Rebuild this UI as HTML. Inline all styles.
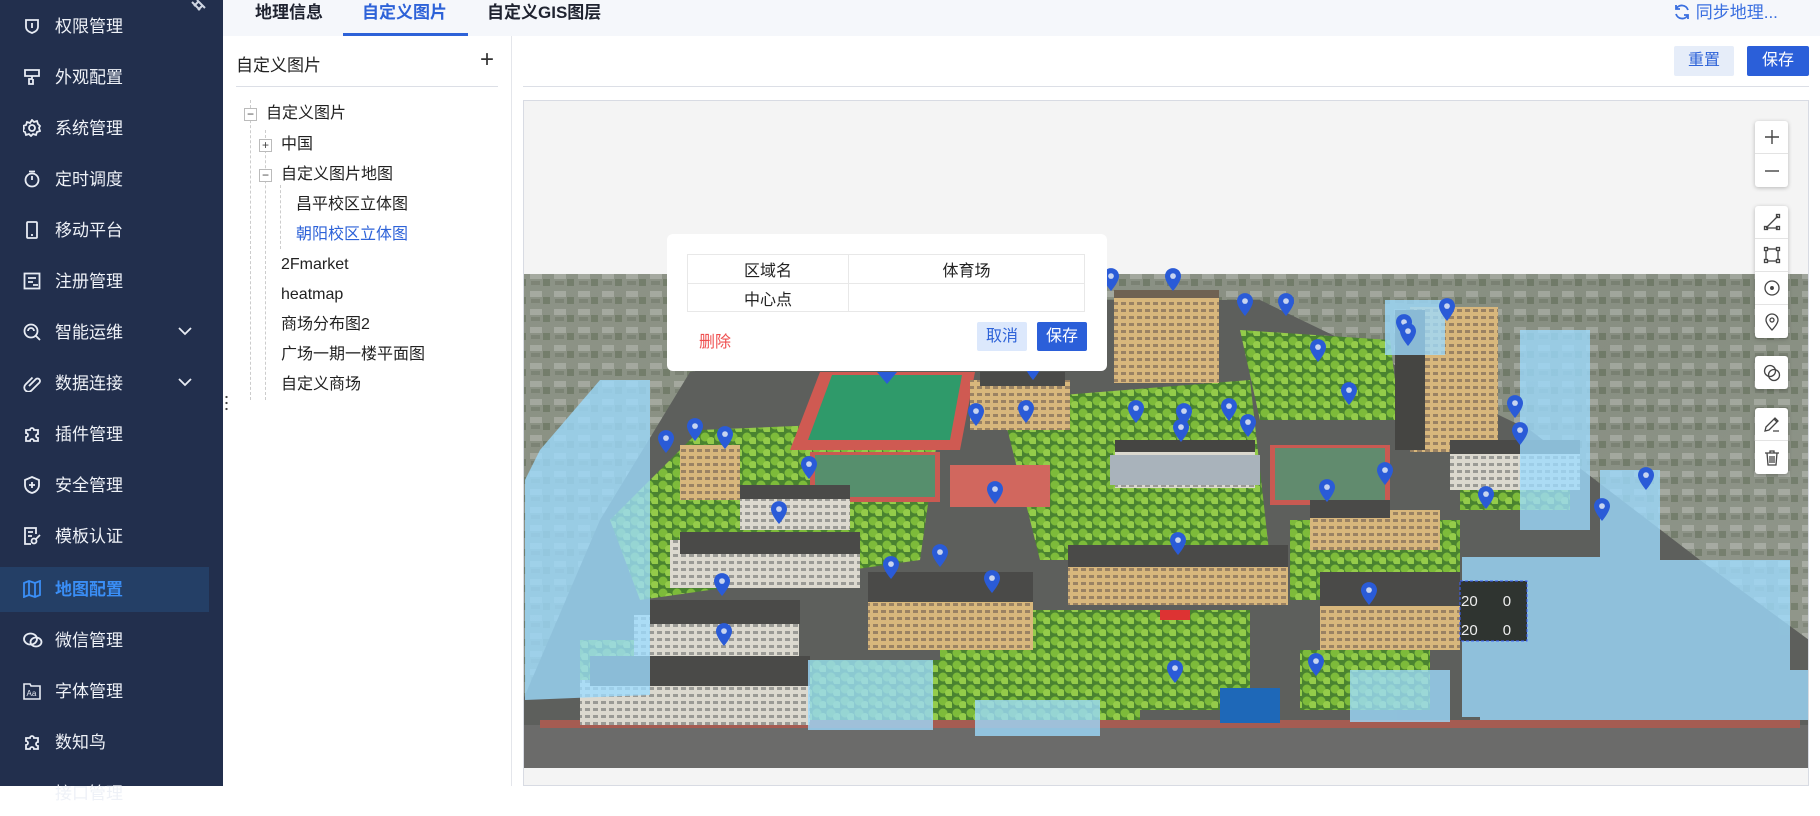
<!DOCTYPE html>
<html><head><meta charset="utf-8"><style>
*{margin:0;padding:0;box-sizing:border-box}
body{width:1820px;height:786px;overflow:hidden;background:#fff;font-family:"Liberation Sans","Noto Sans CJK SC",sans-serif;position:relative}
.abs{position:absolute}
#side{left:0;top:0;width:223px;height:786px;background:#222f4d}
.mi{position:absolute;left:0;width:209px;height:45px;color:#eef1f7;font-size:17px;line-height:45px}
.mi span{position:absolute;left:55px}
.mi svg{position:absolute;left:23px;top:13px}
.mi .ar{position:absolute;left:178px;top:16px}
.act{background:#243f66;color:#3a8ef6;font-weight:bold}
#tabs{left:223px;top:0;width:1597px;height:36px;background:#f5f7fb}
.tab{position:absolute;top:0;font-size:17px;font-weight:bold;line-height:22px;color:#1f2330}
.tree{font-size:16px;color:#222;position:absolute;line-height:20px}
.btn{position:absolute;font-size:16px;text-align:center;border-radius:2px}
.tb{position:absolute;left:1755px;width:33px;background:#fff;border-radius:3px;box-shadow:0 1px 4px rgba(0,0,0,.25)}
.tb div{height:33px;border-bottom:1px solid #e3e3e3;display:flex;align-items:center;justify-content:center}
.tb div:last-child{border-bottom:none}
</style></head><body>
<div id="side" class="abs">
 <svg class="abs" style="left:188px;top:0" width="22" height="16" viewBox="0 0 22 16"><path d="M4 2l8 8M9 0l8 8M6 6l5-5M10 10l5-5" stroke="#cfd6e3" stroke-width="2" fill="none"/></svg>
 <div class="mi" style="top:4px"><svg width="18" height="18" viewBox="0 0 18 18" fill="none" stroke="#e8ecf4" stroke-width="1.8"><path d="M3 3h12v7c0 3-3 5-6 6-3-1-6-3-6-6z"/><path d="M9 6v5"/></svg><span>权限管理</span></div>
 <div class="mi" style="top:55px"><svg width="18" height="18" viewBox="0 0 18 18" fill="none" stroke="#e8ecf4" stroke-width="1.8"><path d="M2 2h14v6H2zM9 8v3H6v5h4v-5"/></svg><span>外观配置</span></div>
 <div class="mi" style="top:106px"><svg width="18" height="18" viewBox="0 0 18 18" fill="none" stroke="#e8ecf4" stroke-width="1.8"><path d="M9 1l2 2 3-1 1 3 2 2-1 2 1 3-3 1-1 3-3-1-2 2-2-2-3 1-1-3-2-1 1-3-1-2 3-1 1-3 3 1z"/><circle cx="9" cy="9" r="3"/></svg><span>系统管理</span></div>
 <div class="mi" style="top:157px"><svg width="18" height="18" viewBox="0 0 18 18" fill="none" stroke="#e8ecf4" stroke-width="1.8"><circle cx="9" cy="10" r="6.5"/><path d="M6 1.5h6M9 6v4"/></svg><span>定时调度</span></div>
 <div class="mi" style="top:208px"><svg width="18" height="18" viewBox="0 0 18 18" fill="none" stroke="#e8ecf4" stroke-width="1.8"><rect x="4" y="1" width="10" height="16" rx="1"/><path d="M8 14h2"/></svg><span>移动平台</span></div>
 <div class="mi" style="top:259px"><svg width="18" height="18" viewBox="0 0 18 18" fill="none" stroke="#e8ecf4" stroke-width="1.8"><rect x="1.5" y="1.5" width="15" height="15"/><path d="M5 6h8M5 10h5M10 13h5"/></svg><span>注册管理</span></div>
 <div class="mi" style="top:310px"><svg width="18" height="18" viewBox="0 0 18 18" fill="none" stroke="#e8ecf4" stroke-width="1.8"><circle cx="8" cy="8" r="6.5"/><path d="M12 12l5 5M5 8a3 3 0 0 1 6 0"/></svg><span>智能运维</span><svg class="ar" width="14" height="10" viewBox="0 0 14 10"><path d="M1 2l6 6 6-6" stroke="#e8ecf4" stroke-width="1.8" fill="none"/></svg></div>
 <div class="mi" style="top:361px"><svg width="18" height="18" viewBox="0 0 18 18" fill="none" stroke="#e8ecf4" stroke-width="1.8"><path d="M6 12l7-7a2.5 2.5 0 0 1 3.5 3.5l-8 8a4 4 0 0 1-6-6l7-7"/></svg><span>数据连接</span><svg class="ar" width="14" height="10" viewBox="0 0 14 10"><path d="M1 2l6 6 6-6" stroke="#e8ecf4" stroke-width="1.8" fill="none"/></svg></div>
 <div class="mi" style="top:412px"><svg width="18" height="18" viewBox="0 0 18 18" fill="none" stroke="#e8ecf4" stroke-width="1.8"><path d="M3 5h4a2 2 0 1 1 4 0h4v4a2 2 0 1 0 0 4v3h-4a2 2 0 1 0-4 0H3v-4a2 2 0 1 0 0-4z"/></svg><span>插件管理</span></div>
 <div class="mi" style="top:463px"><svg width="18" height="18" viewBox="0 0 18 18" fill="none" stroke="#e8ecf4" stroke-width="1.8"><path d="M9 1l7 3v5c0 4-3 7-7 8-4-1-7-4-7-8V4z"/><path d="M6 9h6M9 6v6"/></svg><span>安全管理</span></div>
 <div class="mi" style="top:514px"><svg width="18" height="18" viewBox="0 0 18 18" fill="none" stroke="#e8ecf4" stroke-width="1.8"><path d="M13 7V1H2v16h6M5 5h5M5 9h4"/><circle cx="11" cy="14" r="2.5"/><path d="M13 12l4-4"/></svg><span>模板认证</span></div>
 <div class="mi act" style="top:567px"><svg width="18" height="18" viewBox="0 0 18 18" fill="none" stroke="#3a8ef6" stroke-width="1.8"><path d="M1 3l5-2 6 2 5-2v14l-5 2-6-2-5 2zM6 1v14M12 3v14"/></svg><span>地图配置</span></div>
 <div class="mi" style="top:618px"><svg width="20" height="18" viewBox="0 0 20 18" fill="none" stroke="#e8ecf4" stroke-width="1.8"><ellipse cx="7.5" cy="8" rx="6.5" ry="5.5"/><ellipse cx="13" cy="11" rx="5.5" ry="4.5"/></svg><span>微信管理</span></div>
 <div class="mi" style="top:669px"><svg width="18" height="18" viewBox="0 0 18 18" fill="none" stroke="#e8ecf4" stroke-width="1.6"><path d="M1 2h6l1 2h9v13H1z"/><text x="3.5" y="14" font-size="8" fill="#e8ecf4" stroke="none" font-family="Liberation Sans">Aa</text></svg><span>字体管理</span></div>
 <div class="mi" style="top:720px"><svg width="18" height="18" viewBox="0 0 18 18" fill="none" stroke="#e8ecf4" stroke-width="1.8"><path d="M3 5h4a2 2 0 1 1 4 0h4v4a2 2 0 1 0 0 4v3h-4a2 2 0 1 0-4 0H3v-4a2 2 0 1 0 0-4z"/></svg><span>数知鸟</span></div>
 <div class="mi" style="top:771px"><span>接口管理</span></div>
</div>
<div class="abs" style="left:223px;top:36px;width:1597px;height:750px;background:#fff"></div>
<div id="tabs" class="abs">
 <div class="tab" style="left:32px;top:2px">地理信息</div>
 <div class="tab" style="left:139px;top:2px;color:#2d62d8">自定义图片</div>
 <div class="abs" style="left:120px;top:33px;width:125px;height:3px;background:#2d62d8"></div>
 <div class="tab" style="left:264px;top:2px">自定义GIS图层</div>
 <div class="abs" style="left:1450px;top:2px;font-size:17px;color:#3a6fe0;line-height:22px"><svg width="18" height="18" viewBox="0 0 18 18" style="vertical-align:-3px" fill="none" stroke="#3a6fe0" stroke-width="1.8"><path d="M15 7A6.5 6.5 0 0 0 3 6M3 2v4h4M3 11a6.5 6.5 0 0 0 12 1M15 16v-4h-4"/></svg> 同步地理...</div>
</div>
<div class="abs" style="left:511px;top:36px;width:1px;height:750px;background:#e4e6eb"></div>
<div class="abs" style="left:225px;top:394px;width:3px;height:18px;background:radial-gradient(circle,#444 1px,transparent 1.3px) 0 0/3px 6px"></div>
<div class="abs" style="left:236px;top:51px;font-size:17px;color:#222">自定义图片</div>
<div class="abs" style="left:480px;top:46px;font-size:24px;color:#333;font-weight:300">+</div>
<div class="abs" style="left:236px;top:86px;width:262px;height:1px;background:#dcdfe6"></div>
<div class="abs" style="left:250px;top:100px;height:300px;border-left:1px dashed #ccc"></div>
<div class="abs" style="left:265px;top:130px;height:270px;border-left:1px dashed #ccc"></div>
<div class="abs" style="left:280px;top:185px;height:64px;border-left:1px dashed #ccc"></div>
<div class="abs" style="left:244px;top:108px;width:13px;height:13px;border:1px solid #bbb;background:#fff;font-size:12px;line-height:10px;text-align:center;color:#444">−</div>
<div class="abs" style="left:259px;top:139px;width:13px;height:13px;border:1px solid #bbb;background:#fff;font-size:12px;line-height:10px;text-align:center;color:#444">+</div>
<div class="abs" style="left:259px;top:169px;width:13px;height:13px;border:1px solid #bbb;background:#fff;font-size:12px;line-height:10px;text-align:center;color:#444">−</div>
<div class="tree" style="left:266px;top:104px">自定义图片</div>
<div class="tree" style="left:281px;top:135px">中国</div>
<div class="tree" style="left:281px;top:165px">自定义图片地图</div>
<div class="tree" style="left:296px;top:195px">昌平校区立体图</div>
<div class="tree" style="left:296px;top:225px;color:#2d62d8">朝阳校区立体图</div>
<div class="tree" style="left:281px;top:255px">2Fmarket</div>
<div class="tree" style="left:281px;top:285px">heatmap</div>
<div class="tree" style="left:281px;top:315px">商场分布图2</div>
<div class="tree" style="left:281px;top:345px">广场一期一楼平面图</div>
<div class="tree" style="left:281px;top:375px">自定义商场</div>
<div class="btn" style="left:1674px;top:46px;width:60px;height:30px;line-height:30px;background:#e6edf9;color:#2d62d8">重置</div>
<div class="btn" style="left:1747px;top:46px;width:62px;height:30px;line-height:30px;background:#2b5fd9;color:#fff">保存</div>
<div class="abs" style="left:523px;top:86px;width:1286px;height:1px;background:#dcdfe6"></div>
<div class="abs" style="left:523px;top:100px;width:1286px;height:686px;border:1px solid #d8dbe3;background:#f4f4f4;overflow:hidden">
<svg width="1286" height="686" viewBox="523 100 1286 686" style="position:absolute;left:-1px;top:-1px">
<defs>
<linearGradient id="city" x1="0" y1="0" x2="1" y2="1"><stop offset="0" stop-color="#8c9384"/><stop offset=".5" stop-color="#7d8677"/><stop offset="1" stop-color="#a1a59d"/></linearGradient>
<pattern id="bl" width="24" height="18" patternUnits="userSpaceOnUse"><rect width="24" height="18" fill="#8d9387"/><rect x="2" y="3" width="12" height="6" fill="#b3b6af"/><rect x="15" y="9" width="7" height="7" fill="#68735f"/><rect x="3" y="11" width="9" height="4" fill="#767d6f"/></pattern>
<pattern id="tr" width="14" height="12" patternUnits="userSpaceOnUse"><rect width="14" height="12" fill="#4a8330"/><circle cx="5" cy="5" r="4.5" fill="#7dbb3a"/><circle cx="11" cy="9" r="4" fill="#94cc4a"/></pattern>
<pattern id="win" width="8" height="7" patternUnits="userSpaceOnUse"><rect width="8" height="7" fill="#d8b77c"/><rect x="1" y="1" width="5" height="3" fill="#9a8263"/></pattern>
<pattern id="win2" width="8" height="7" patternUnits="userSpaceOnUse"><rect width="8" height="7" fill="#dcd9cf"/><rect x="1" y="1" width="5" height="3" fill="#9a9a95"/></pattern>
<symbol id="pin" viewBox="0 0 14 20"><path d="M7 0C3 0 0 3 0 7c0 5 7 13 7 13s7-8 7-13C14 3 11 0 7 0z" fill="#2a5bd7"/><circle cx="7" cy="7" r="2.5" fill="#c7d4f0"/></symbol>
</defs>
<rect x="523" y="274" width="1286" height="494" fill="url(#bl)"/>
<rect x="523" y="274" width="1286" height="494" fill="url(#city)" opacity=".35"/>
<polygon points="690,372 1100,300 1260,300 1530,430 1700,560 1809,640 1809,768 523,768 523,700 600,520" fill="#5d5f5c"/>
<rect x="523" y="725" width="1286" height="43" fill="#6b6b6a"/>
<rect x="540" y="720" width="1260" height="8" fill="#a55c52"/>
<polygon points="700,430 940,420 920,560 640,600 610,520" fill="url(#tr)"/>
<polygon points="1000,400 1250,380 1270,560 1040,560" fill="url(#tr)"/>
<polygon points="1240,330 1390,340 1400,420 1260,420" fill="url(#tr)"/>
<rect x="940" y="610" width="310" height="100" fill="url(#tr)"/>
<rect x="1290" y="520" width="170" height="80" fill="url(#tr)"/>
<rect x="580" y="640" width="200" height="50" fill="url(#tr)"/>
<rect x="800" y="660" width="340" height="60" fill="url(#tr)"/>
<rect x="1460" y="440" width="110" height="70" fill="url(#tr)"/>
<rect x="1300" y="650" width="130" height="60" fill="url(#tr)"/>
<polygon points="820,372 975,372 960,450 790,450" fill="#cf5a52"/>
<polygon points="832,375 962,375 950,440 808,440" fill="#2f9a6a"/>
<rect x="810" y="452" width="130" height="50" fill="#c95a52"/>
<rect x="815" y="455" width="120" height="42" fill="#3a9c74" opacity=".8"/>
<rect x="950" y="465" width="100" height="42" fill="#d1675e"/>
<rect x="1270" y="445" width="120" height="60" fill="#c95a52"/>
<rect x="1275" y="448" width="110" height="52" fill="#3d9c78" opacity=".75"/>
<rect x="1114" y="290" width="105" height="93" fill="url(#win)"/><rect x="1114" y="290" width="105" height="8" fill="#6f6252"/>
<rect x="1410" y="307" width="88" height="145" fill="url(#win)"/><rect x="1395" y="310" width="30" height="140" fill="#454542"/>
<rect x="1068" y="545" width="220" height="60" fill="url(#win)"/><rect x="1068" y="545" width="220" height="22" fill="#4a4a48"/>
<rect x="1115" y="448" width="140" height="40" fill="url(#win2)"/><rect x="1115" y="440" width="140" height="12" fill="#454542"/>
<rect x="680" y="445" width="60" height="55" fill="url(#win)"/>
<rect x="740" y="490" width="110" height="40" fill="url(#win2)"/><rect x="740" y="485" width="110" height="14" fill="#4a4a48"/>
<rect x="670" y="540" width="190" height="48" fill="url(#win2)"/><rect x="680" y="532" width="180" height="22" fill="#4a4a48"/>
<rect x="634" y="615" width="165" height="50" fill="url(#win2)"/><rect x="650" y="600" width="150" height="24" fill="#4a4a48"/>
<rect x="580" y="680" width="230" height="45" fill="url(#win2)"/><rect x="590" y="656" width="220" height="30" fill="#4a4a48"/>
<rect x="868" y="590" width="165" height="60" fill="url(#win)"/><rect x="868" y="572" width="165" height="30" fill="#4a4a48"/>
<rect x="1320" y="600" width="140" height="50" fill="url(#win)"/><rect x="1320" y="572" width="140" height="34" fill="#4a4a48"/>
<rect x="1310" y="510" width="130" height="40" fill="url(#win)"/><rect x="1310" y="500" width="80" height="18" fill="#4a4a48"/>
<rect x="1450" y="450" width="130" height="40" fill="url(#win2)"/><rect x="1450" y="440" width="130" height="14" fill="#4a4a48"/>
<rect x="970" y="380" width="100" height="50" fill="url(#win)"/><rect x="980" y="372" width="85" height="14" fill="#4a4a48"/>
<rect x="1110" y="455" width="150" height="30" fill="#a9b3bb"/>
<rect x="1220" y="688" width="60" height="35" fill="#1e68b8"/>
<g fill="#9edcff" opacity=".78">
<polygon points="540,450 600,380 650,380 650,695 525,700 525,480"/>
<rect x="808" y="660" width="125" height="70" />
<rect x="975" y="700" width="125" height="36"/>
<rect x="1350" y="670" width="100" height="52"/>
<rect x="1462" y="557" width="180" height="160"/>
<rect x="1620" y="560" width="170" height="160"/>
<rect x="1385" y="300" width="60" height="55"/>
<rect x="1520" y="330" width="70" height="200"/>
<rect x="1480" y="670" width="330" height="50"/>
<rect x="1600" y="470" width="60" height="120"/>
</g>
<rect x="1460" y="581" width="67" height="60" fill="#2f3430" stroke="#3c62ff" stroke-dasharray="3,2"/>
<text x="1461" y="606" fill="#eee" font-size="15" font-family="Liberation Sans">20&#160;&#160;&#160;&#160;&#160;&#160;0</text>
<text x="1461" y="635" fill="#eee" font-size="15" font-family="Liberation Sans">20&#160;&#160;&#160;&#160;&#160;&#160;0</text>
<rect x="1160" y="610" width="30" height="10" fill="#d33"/>
<g>
<use href="#pin" x="658" y="430" width="16" height="23"/><use href="#pin" x="687" y="418" width="16" height="23"/><use href="#pin" x="717" y="426" width="16" height="23"/>
<use href="#pin" x="801" y="456" width="16" height="23"/><use href="#pin" x="771" y="501" width="16" height="23"/><use href="#pin" x="883" y="556" width="16" height="23"/>
<use href="#pin" x="932" y="544" width="16" height="23"/><use href="#pin" x="984" y="570" width="16" height="23"/><use href="#pin" x="714" y="573" width="16" height="23"/>
<use href="#pin" x="716" y="623" width="16" height="23"/><use href="#pin" x="987" y="481" width="16" height="23"/><use href="#pin" x="968" y="403" width="16" height="23"/>
<use href="#pin" x="1018" y="400" width="16" height="23"/><use href="#pin" x="1025" y="357" width="16" height="23"/><use href="#pin" x="1103" y="268" width="16" height="23"/>
<use href="#pin" x="1165" y="268" width="16" height="23"/><use href="#pin" x="1237" y="293" width="16" height="23"/><use href="#pin" x="1278" y="293" width="16" height="23"/>
<use href="#pin" x="1310" y="339" width="16" height="23"/><use href="#pin" x="1341" y="382" width="16" height="23"/><use href="#pin" x="1396" y="314" width="16" height="23"/>
<use href="#pin" x="1400" y="323" width="16" height="23"/><use href="#pin" x="1439" y="298" width="16" height="23"/><use href="#pin" x="1507" y="395" width="16" height="23"/>
<use href="#pin" x="1512" y="422" width="16" height="23"/><use href="#pin" x="1638" y="467" width="16" height="23"/><use href="#pin" x="1594" y="498" width="16" height="23"/>
<use href="#pin" x="1478" y="486" width="16" height="23"/><use href="#pin" x="1377" y="462" width="16" height="23"/><use href="#pin" x="1319" y="479" width="16" height="23"/>
<use href="#pin" x="1240" y="414" width="16" height="23"/><use href="#pin" x="1221" y="398" width="16" height="23"/><use href="#pin" x="1176" y="403" width="16" height="23"/>
<use href="#pin" x="1173" y="419" width="16" height="23"/><use href="#pin" x="1128" y="400" width="16" height="23"/><use href="#pin" x="1170" y="532" width="16" height="23"/>
<use href="#pin" x="1361" y="582" width="16" height="23"/><use href="#pin" x="1308" y="653" width="16" height="23"/><use href="#pin" x="1167" y="660" width="16" height="23"/>
<path d="M877 372l10 12 10-12z" fill="#2a5bd7"/>
</g>
</svg>
</div>
<div class="abs" style="left:667px;top:234px;width:440px;height:137px;background:#fff;border-radius:6px"></div>
<table class="abs" style="left:687px;top:254px;width:398px;border-collapse:collapse;font-size:16px;color:#222;text-align:center">
<tr style="height:29px"><td style="border:1px solid #e8e8e8;width:161px">区域名</td><td style="border:1px solid #e8e8e8">体育场</td></tr>
<tr style="height:28px"><td style="border:1px solid #e8e8e8">中心点</td><td style="border:1px solid #e8e8e8"></td></tr>
</table>
<div class="abs" style="left:699px;top:328px;font-size:16px;color:#ef4f4f">删除</div>
<div class="btn" style="left:977px;top:322px;width:50px;height:29px;line-height:29px;background:#dce8fc;color:#2d62d8">取消</div>
<div class="btn" style="left:1037px;top:322px;width:50px;height:29px;line-height:29px;background:#2b5fd9;color:#fff">保存</div>
<div class="tb" style="top:121px"><div><svg width="16" height="16"><path d="M8 1v14M1 8h14" stroke="#444" stroke-width="1.4"/></svg></div><div><svg width="16" height="16"><path d="M1 8h14" stroke="#444" stroke-width="1.4"/></svg></div></div>
<div class="tb" style="top:206px">
<div><svg width="18" height="18" viewBox="0 0 18 18" fill="none" stroke="#444" stroke-width="1.3"><path d="M3 15L15 3M3 15h12"/><rect x="1.5" y="13.5" width="3" height="3"/><rect x="13.5" y="1.5" width="3" height="3"/><rect x="13.5" y="13.5" width="3" height="3"/></svg></div>
<div><svg width="18" height="18" viewBox="0 0 18 18" fill="none" stroke="#444" stroke-width="1.3"><rect x="3" y="3" width="12" height="12"/><rect x="1.5" y="1.5" width="3" height="3" fill="#fff"/><rect x="13.5" y="1.5" width="3" height="3" fill="#fff"/><rect x="1.5" y="13.5" width="3" height="3" fill="#fff"/><rect x="13.5" y="13.5" width="3" height="3" fill="#fff"/></svg></div>
<div><svg width="18" height="18" viewBox="0 0 18 18" fill="none" stroke="#444" stroke-width="1.3"><circle cx="9" cy="9" r="7"/><circle cx="9" cy="9" r="1.3" fill="#444"/></svg></div>
<div><svg width="18" height="18" viewBox="0 0 18 18" fill="none" stroke="#444" stroke-width="1.3"><path d="M9 17s-6-6-6-10a6 6 0 0 1 12 0c0 4-6 10-6 10z"/><circle cx="9" cy="7" r="2"/></svg></div>
</div>
<div class="tb" style="top:356px"><div><svg width="18" height="18" viewBox="0 0 18 18" fill="none" stroke="#444" stroke-width="1.3"><circle cx="7" cy="7" r="5.5"/><circle cx="11" cy="11" r="5.5"/></svg></div></div>
<div class="tb" style="top:408px">
<div><svg width="18" height="18" viewBox="0 0 18 18" fill="none" stroke="#444" stroke-width="1.3"><path d="M2 16l1-4 9-9 3 3-9 9zM11 4l3 3M10 16h6"/></svg></div>
<div><svg width="18" height="18" viewBox="0 0 18 18" fill="none" stroke="#444" stroke-width="1.3"><path d="M2 4h14M7 4V2h4v2M4 4l1 12h8l1-12M7 7v7M9 7v7M11 7v7"/></svg></div>
</div>
</body></html>
